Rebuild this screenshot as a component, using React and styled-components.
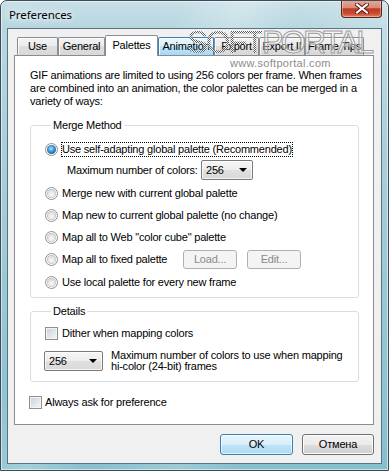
import React from "react";
import styled, { createGlobalStyle } from "styled-components";

const Global = createGlobalStyle`
  html, body { margin: 0; padding: 0; background: #fff; }
  body { width: 389px; height: 471px; overflow: hidden; font-family: "Liberation Sans", Arial, sans-serif; font-size: 11px; letter-spacing: -0.2px; color: #000; }
  * { box-sizing: border-box; }
`;

const Window = styled.div`
  width: 389px;
  height: 471px;
  border: 1px solid #3b4c55;
  border-radius: 7px 7px 0 0;
  background:
    linear-gradient(115deg, rgba(255,255,255,0) 30%, rgba(255,255,255,0.25) 40%, rgba(255,255,255,0) 50%, rgba(255,255,255,0.18) 65%, rgba(255,255,255,0) 75%),
    linear-gradient(180deg, #c9e0e8 0px, #b6d6e0 28px, #a2cbd8 220px, #86bfcf 471px);
  box-shadow: inset 0 0 0 1px rgba(255,255,255,0.55);
  display: flex;
  flex-direction: column;
  overflow: hidden;
`;

const TitleBar = styled.div`
  height: 27px;
  flex: none;
  display: flex;
  align-items: flex-start;
  justify-content: space-between;
  padding: 0 6px 0 8px;
`;

const Title = styled.div`
  align-self: center;
  font-family: "Noto Sans", "Open Sans", sans-serif;
  font-size: 11.5px;
  letter-spacing: -0.1px;
  line-height: 16px;
  color: #000;
  text-shadow: 0 0 6px #fff, 0 0 10px rgba(255,255,255,0.9);
`;

const CloseButton = styled.div`
  width: 41px;
  height: 18px;
  margin-top: -1px;
  border: 1px solid #5e2317;
  border-top: none;
  border-radius: 0 0 4px 4px;
  background: linear-gradient(180deg, #e6ab9d 0%, #d68a7a 45%, #c1381f 52%, #c94d31 80%, #dc8468 100%);
  box-shadow: inset 0 0 0 1px rgba(255,255,255,0.35);
  display: flex;
  align-items: center;
  justify-content: center;
`;

const Client = styled.div`
  flex: 1;
  margin: 0 6px 6px;
  border: 1px solid #5b7380;
  background: #f0f0f0;
  padding: 6px 7px 8px 6px;
  display: flex;
  flex-direction: column;
`;

const TabStrip = styled.div`
  position: relative;
  z-index: 1;
  height: 21px;
  margin-bottom: -1px;
  padding-left: 3px;
  display: flex;
  align-items: flex-start;
`;

const Tab = styled.div`
  width: ${(p) => p.w}px;
  height: ${(p) => (p.active ? 21 : 18)}px;
  margin-top: ${(p) => (p.active ? 0 : 2)}px;
  border: 1px solid ${(p) => (p.hover ? "#3c7fb1" : "#898c95")};
  border-bottom: none;
  border-radius: 2px 2px 0 0;
  background: ${(p) =>
    p.active
      ? "#fff"
      : p.hover
      ? "linear-gradient(180deg, #eaf6fd 0%, #d9f0fc 50%, #bee6fd 50%, #a7d9f5 100%)"
      : "linear-gradient(180deg, #f3f3f3 0%, #ebebeb 50%, #dedede 50%, #d8d8d8 100%)"};
  box-shadow: ${(p) => (p.active ? "none" : "inset 1px 1px 0 rgba(255,255,255,0.8)")};
  text-align: center;
  font-size: 11px;
  line-height: 16px;
  padding-top: ${(p) => (p.active ? 1 : 0)}px;
  white-space: nowrap;
`;

const Panel = styled.div`
  position: relative;
  height: 370px;
  flex: none;
  border: 1px solid #898c95;
  background: #fff;
  padding: 13px 0 0 15px;
  display: flex;
  flex-direction: column;
  align-items: flex-start;
`;

const Intro = styled.p`
  margin: 0;
  font-size: 11px;
  line-height: 13px;
  white-space: nowrap;
`;

const Group = styled.fieldset`
  margin: ${(p) => p.mt}px 0 0 0;
  width: 329px;
  min-width: 0;
  border: 1px solid #d5dfe5;
  border-radius: 3px;
  padding: ${(p) => p.pad};
  display: flex;
  flex-direction: column;
  align-items: flex-start;
`;

const Legend = styled.legend`
  margin-left: 6px;
  padding: 0 2px;
  font-size: 11px;
  line-height: 13px;
`;

const Row = styled.div`
  display: flex;
  align-items: center;
  height: ${(p) => p.h || 22}px;
  margin-top: ${(p) => p.mt || 0}px;
  margin-left: ${(p) => p.ml || 0}px;
`;

const RadioMark = styled.span`
  position: relative;
  flex: none;
  width: 13px;
  height: 13px;
  border-radius: 50%;
  border: 1px solid #8f9191;
  background: #fdfdfd;
  &::after {
    content: "";
    position: absolute;
    left: 1px;
    top: 1px;
    width: 9px;
    height: 9px;
    border-radius: 50%;
    background: ${(p) =>
      p.checked
        ? "radial-gradient(circle at 45% 40%, #b9e4fb 0%, #4aa3de 35%, #1b5c9f 75%, #bcbcbc 95%)"
        : "radial-gradient(circle at 50% 60%, #fafafa 0%, #e4e4e4 45%, #c6c6c6 100%)"};
    box-shadow: inset 0 0 0 0.5px rgba(120,120,120,0.35);
  }
`;

const CheckMark = styled.span`
  flex: none;
  width: 13px;
  height: 13px;
  border: 1px solid #8e8f8f;
  background: linear-gradient(135deg, #c9cdd2 0%, #e3e5e8 55%, #f7f7f7 100%);
  box-shadow: inset 0 0 0 1px #f4f4f4;
`;

const OptionLabel = styled.span`
  margin-left: ${(p) => (p.gap != null ? p.gap : 3)}px;
  border: 1px ${(p) => (p.focused ? "dotted #000" : "solid transparent")};
  line-height: 13px;
  white-space: nowrap;
  ${(p) => (p.w ? `width: ${p.w}px;` : "")}
`;

const SubLabel = styled.span`
  width: 134px;
  line-height: 13px;
  white-space: nowrap;
`;

const Combo = styled.div`
  position: relative;
  flex: none;
  width: ${(p) => p.w}px;
  height: 20px;
  border: 1px solid #7a7a7a;
  border-radius: 2px;
  background: linear-gradient(180deg, #f6f6f6 0%, #ececec 50%, #e0e0e0 50%, #d9d9d9 100%);
  box-shadow: inset 0 0 0 1px rgba(255,255,255,0.7);
  padding-left: 4px;
  line-height: 18px;
  font-size: 11px;
  &::after {
    content: "";
    position: absolute;
    right: 5px;
    top: 7px;
    border-left: 4px solid transparent;
    border-right: 4px solid transparent;
    border-top: 4px solid #000;
  }
`;

const SmallButton = styled.div`
  width: 54px;
  height: 19px;
  margin-left: ${(p) => p.ml || 0}px;
  border: 1px solid #adb2b5;
  border-radius: 3px;
  background: #f4f4f4;
  color: #8a8a8a;
  text-align: center;
  line-height: 17px;
  font-size: 11px;
`;

const DepthText = styled.div`
  margin-left: 8px;
  line-height: 11px;
  white-space: nowrap;
`;

const ButtonRow = styled.div`
  margin-top: 9px;
  height: 21px;
  display: flex;
  justify-content: flex-end;
  gap: 9px;
`;

const DialogButton = styled.div`
  width: ${(p) => p.w}px;
  height: 21px;
  border: 1px solid ${(p) => (p.primary ? "#3c7fb1" : "#707070")};
  border-radius: 3px;
  background: ${(p) =>
    p.primary
      ? "linear-gradient(180deg, #e8f5fc 0%, #d7eefa 50%, #bfe3f6 50%, #b0dcf3 100%)"
      : "linear-gradient(180deg, #f2f2f2 0%, #ebebeb 50%, #dddddd 50%, #cfcfcf 100%)"};
  box-shadow: inset 0 0 0 1px ${(p) => (p.primary ? "rgba(255,255,255,0.6)" : "#fcfcfc")};
  text-align: center;
  line-height: 19px;
  font-size: 11px;
`;

/* watermark overlay, positioned relative to the panel's padding box (panel border top at y=55) */
const Watermark = styled.div`
  position: absolute;
  z-index: 2;
  left: 172px;
  top: -30px;
  display: flex;
  font-family: "Liberation Sans", Arial, sans-serif;
  font-size: 32px;
  line-height: 32px;
  height: 32px;
  letter-spacing: -2.6px;
  pointer-events: none;
  white-space: nowrap;
`;

const Dotted = styled.span`
  background: repeating-conic-gradient(#5c5c5c 0 25%, rgba(255,255,255,0.8) 0 50%) 0 0 / 2px 2px;
  -webkit-background-clip: text;
  background-clip: text;
  color: transparent;
`;

const Outlined = styled.span`
  color: rgba(255,255,255,0.4);
  -webkit-text-stroke: 1px #9e9e9e;
`;

const WatermarkUrl = styled.div`
  position: absolute;
  z-index: 2;
  left: 215px;
  top: 1px;
  font-size: 11px;
  line-height: 13px;
  letter-spacing: 0.3px;
  color: #8c8c8c;
  text-shadow: 0 0 2px #fff, 0 0 2px #fff;
  pointer-events: none;
  white-space: nowrap;
`;

const tabs = [
  { label: "Use", w: 41 },
  { label: "General", w: 47 },
  { label: "Palettes", w: 53, active: true },
  { label: "Animation", w: 56, hover: true },
  { label: "Export", w: 45 },
  { label: "Export II", w: 46 },
  { label: "Frame Tips", w: 59 },
];

export default function App() {
  return (
    <>
      <Global />
      <Window>
        <TitleBar>
          <Title>Preferences</Title>
          <CloseButton>
            <svg width="14" height="11" viewBox="0 0 14 11">
              <path d="M2 1.5 L12 9.5 M12 1.5 L2 9.5" stroke="#5b1a10" strokeWidth="4" strokeLinecap="square" />
              <path d="M2 1.5 L12 9.5 M12 1.5 L2 9.5" stroke="#fff" strokeWidth="2" strokeLinecap="square" />
            </svg>
          </CloseButton>
        </TitleBar>
        <Client>
          <TabStrip>
            {tabs.map((t) => (
              <Tab key={t.label} w={t.w} active={t.active} hover={t.hover}>
                {t.label}
              </Tab>
            ))}
          </TabStrip>
          <Panel>
            <Watermark>
              <Dotted>SOFT</Dotted>
              <Outlined>PORTAL</Outlined>
            </Watermark>
            <WatermarkUrl>www.softportal.com</WatermarkUrl>
            <Intro>
              GIF animations are limited to using 256 colors per frame. When frames
              <br />
              are combined into an animation, the color palettes can be merged in a
              <br />
              variety of ways:
            </Intro>
            <Group mt={11} pad="7px 0 3px 14px">
              <Legend>Merge Method</Legend>
              <Row h={20}>
                <RadioMark checked />
                <OptionLabel focused>Use self-adapting global palette (Recommended)</OptionLabel>
              </Row>
              <Row h={22} ml={22}>
                <SubLabel>Maximum number of colors:</SubLabel>
                <Combo w={52}>256</Combo>
              </Row>
              <Row h={22} mt={1}>
                <RadioMark />
                <OptionLabel>Merge new with current global palette</OptionLabel>
              </Row>
              <Row h={22}>
                <RadioMark />
                <OptionLabel>Map new to current global palette (no change)</OptionLabel>
              </Row>
              <Row h={22}>
                <RadioMark />
                <OptionLabel>Map all to Web "color cube" palette</OptionLabel>
              </Row>
              <Row h={23}>
                <RadioMark />
                <OptionLabel w={122}>Map all to fixed palette</OptionLabel>
                <SmallButton>Load...</SmallButton>
                <SmallButton ml={10}>Edit...</SmallButton>
              </Row>
              <Row h={23}>
                <RadioMark />
                <OptionLabel>Use local palette for every new frame</OptionLabel>
              </Row>
            </Group>
            <Group mt={7} pad="5px 0 10px 14px">
              <Legend>Details</Legend>
              <Row h={20}>
                <CheckMark />
                <OptionLabel gap={3}>Dither when mapping colors</OptionLabel>
              </Row>
              <Row h={20} mt={8} ml={-1}>
                <Combo w={59}>256</Combo>
                <DepthText>
                  Maximum number of colors to use when mapping
                  <br />
                  hi-color (24-bit) frames
                </DepthText>
              </Row>
            </Group>
            <Row h={20} mt={10} ml={-1}>
              <CheckMark />
              <OptionLabel gap={2}>Always ask for preference</OptionLabel>
            </Row>
          </Panel>
          <ButtonRow>
            <DialogButton primary w={73}>OK</DialogButton>
            <DialogButton w={72}>Отмена</DialogButton>
          </ButtonRow>
        </Client>
      </Window>
    </>
  );
}
